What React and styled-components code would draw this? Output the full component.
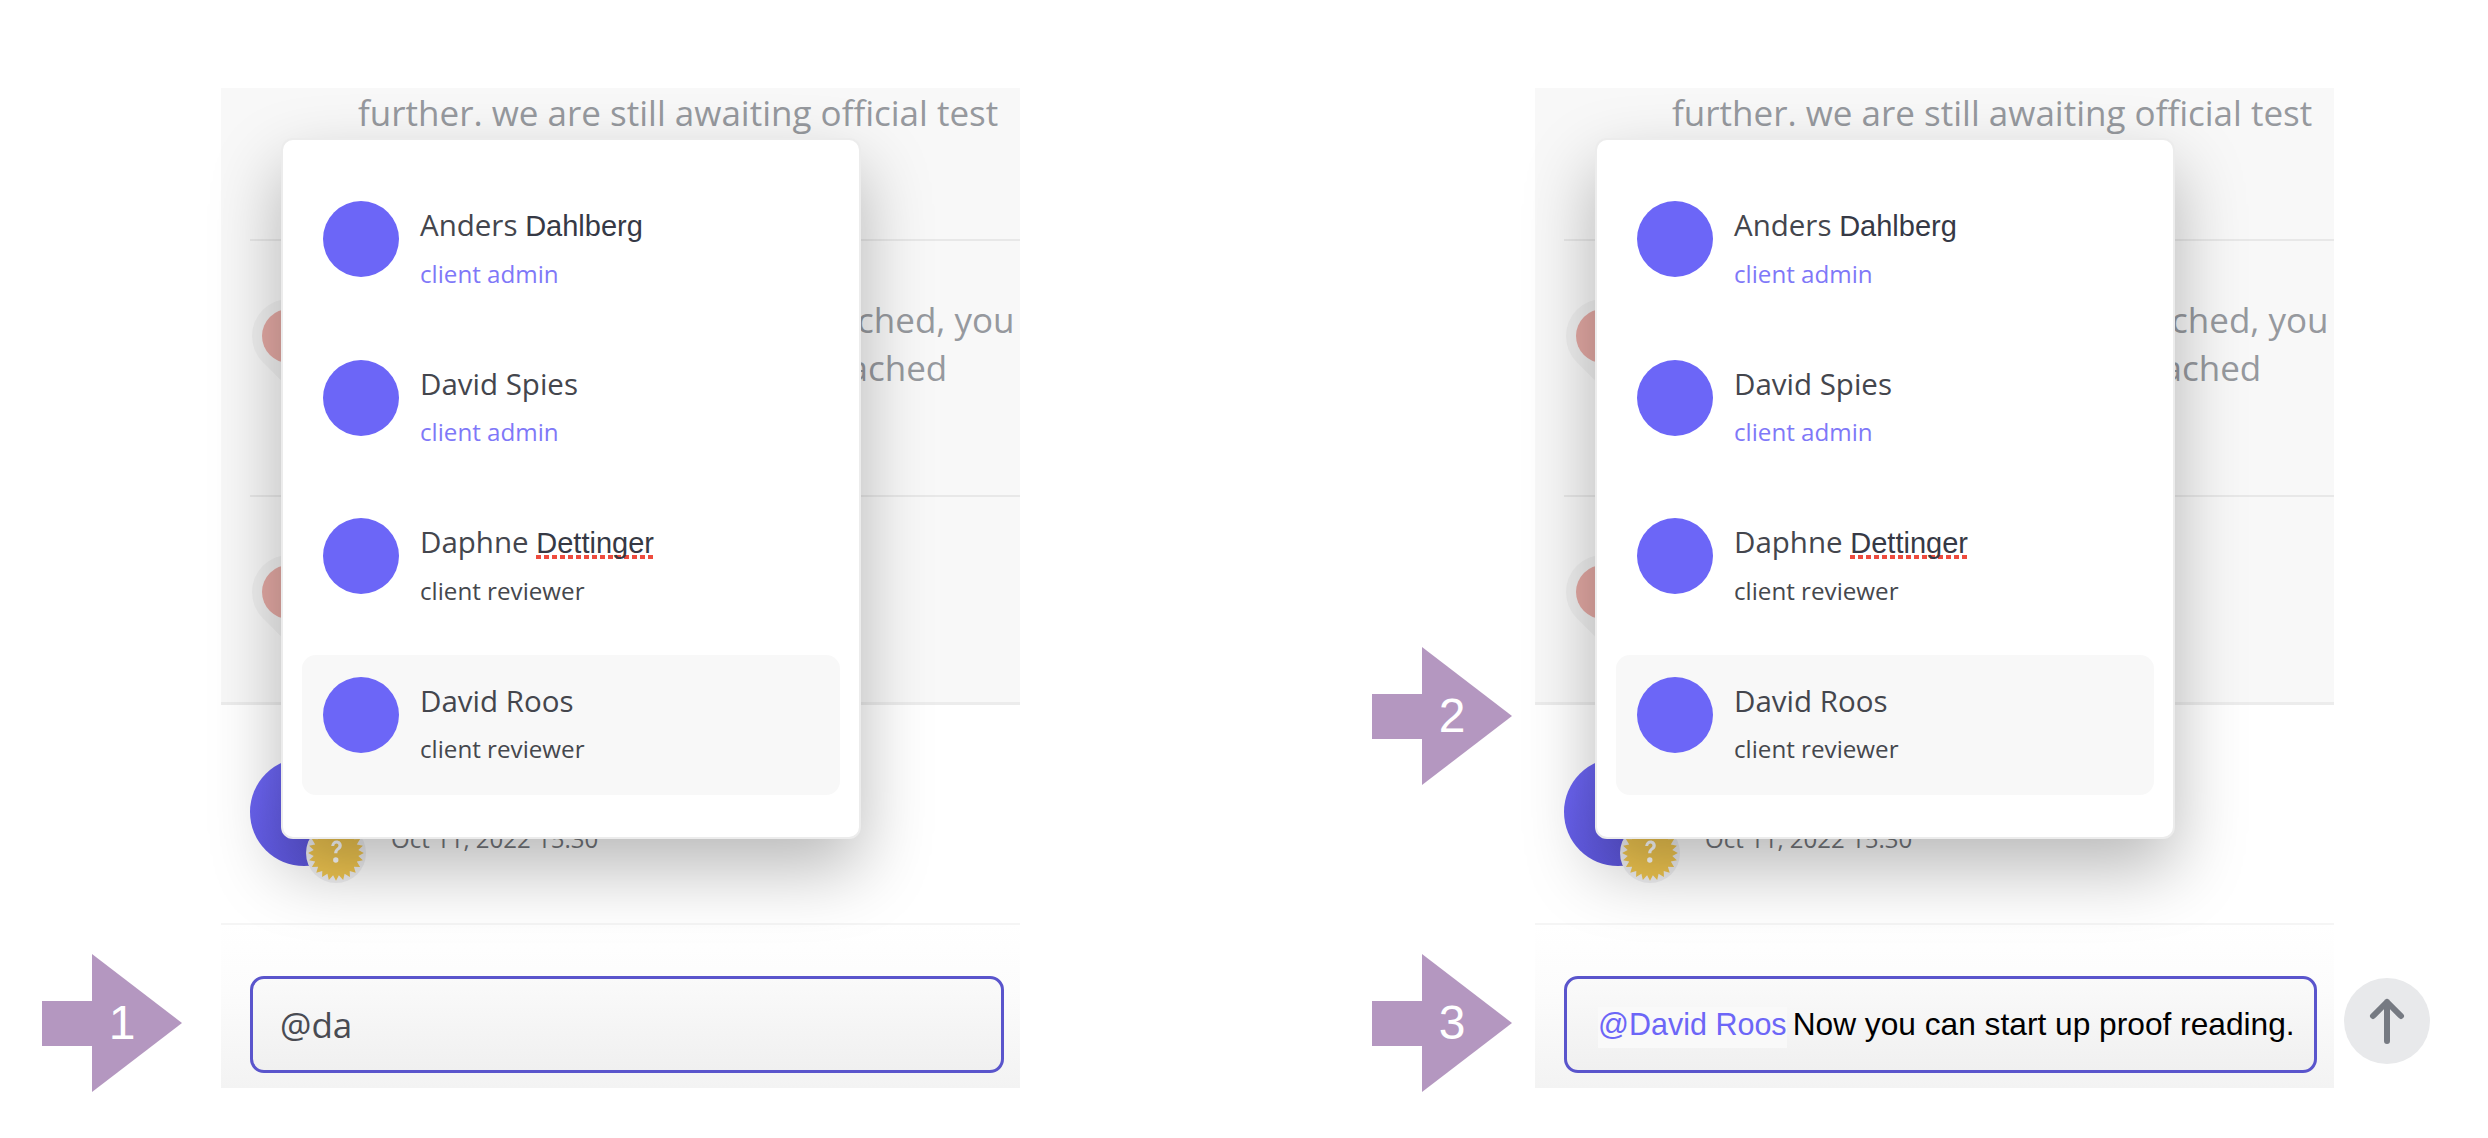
import React from "react";
import styled, { createGlobalStyle } from "styled-components";

const people = [
  { name: "Anders", pasted: "Dahlberg", role: "client admin", admin: true },
  { name: "David Spies", role: "client admin", admin: true },
  { name: "Daphne", misspelt: "Dettinger", role: "client reviewer" },
  { name: "David Roos", role: "client reviewer", active: true },
];

const sealPoints = () => {
  const points = [];
  for (let i = 0; i < 48; i++) {
    const r = i % 2 === 0 ? 26 : 21;
    const a = (i / 48) * Math.PI * 2;
    points.push(`${(28 + r * Math.cos(a)).toFixed(1)},${(28 + r * Math.sin(a)).toFixed(1)}`);
  }
  return points.join(" ");
};

const Seal = () => (
  <SealIcon viewBox="0 0 56 56">
    <circle cx="28" cy="28" r="28" fill="#f0f0f2" />
    <polygon points={sealPoints()} fill="#f0c650" />
    <path d="M23.5 21.5c.4-3.400 2.500-5.200 5-5.200 2.900 0 4.900 2 4.900 4.600 0 2.400-1.500 3.400-2.700 4.400-.9.800-1.400 1.500-1.400 2.900h-3c0-2.200.8-3.400 2-4.500 1.100-.9 2-1.600 2-2.700 0-1.100-.8-1.900-1.900-1.900-1.200 0-1.900.9-2.100 2.300z" fill="#fff" />
    <circle cx="27.800" cy="34.500" r="2.500" fill="#fff" />
  </SealIcon>
);

const Step = ({ number, top, left }) => (
  <StepArrow $top={top} $left={left}>
    <StepTail />
    <StepHead />
    <StepNumber>{number}</StepNumber>
  </StepArrow>
);

const MentionMenu = () => (
  <Menu>
    {people.map((person) => (
      <Person key={person.name} $active={person.active}>
        <PersonAvatar />
        <PersonText>
          <PersonName>
            {person.name}
            {person.pasted && <> <Pasted>{person.pasted}</Pasted></>}
            {person.misspelt && <> <Misspelt>{person.misspelt}</Misspelt></>}
          </PersonName>
          <PersonRole $admin={person.admin}>{person.role}</PersonRole>
        </PersonText>
      </Person>
    ))}
  </Menu>
);

const Thread = () => (
  <>
    <History>
      <FirstMessage>
        <MessageText>further. we are still awaiting official test</MessageText>
      </FirstMessage>
      <Message $height={254}>
        <Halo />
        <MessageText>
          the proofs have now been attached, you
          <br />
          will be told when these are attached
        </MessageText>
      </Message>
      <Message $height={207}>
        <Halo />
        <MessageText>please review</MessageText>
      </Message>
    </History>
    <Latest>
      <LatestAvatar>
        <Seal />
      </LatestAvatar>
      <LatestDate>Oct 11, 2022 15:30</LatestDate>
    </Latest>
  </>
);

const App = () => (
  <Page>
    <GlobalStyle />
    <Panel>
      <Thread />
      <MentionMenu />
      <Composer>
        <ComposerBox>
          <Typed>@da</Typed>
        </ComposerBox>
      </Composer>
      <Step number="1" top={866} left={-179} />
    </Panel>
    <Panel>
      <Thread />
      <MentionMenu />
      <Composer>
        <ComposerBox $wide>
          <Mention>@David Roos</Mention>
          <Sentence>Now you can start up proof reading.</Sentence>
        </ComposerBox>
        <SendButton>
          <svg width="40" height="50" viewBox="0 0 40 50" fill="none" stroke="#767a82" strokeWidth="6" strokeLinecap="round" strokeLinejoin="round">
            <path d="M20 45V6M6 20 20 6l14 14" />
          </svg>
        </SendButton>
      </Composer>
      <Step number="2" top={559} left={-163} />
      <Step number="3" top={866} left={-163} />
    </Panel>
  </Page>
);

const GlobalStyle = createGlobalStyle`
  html, body {
    margin: 0;
    background: #fff;
    font-family: "Open Sans", "Liberation Sans", sans-serif;
  }
`;

const Page = styled.div`
  width: 2488px;
  height: 1138px;
  box-sizing: border-box;
  padding: 88px 0 0 221px;
  display: flex;
  gap: 515px;
  overflow: hidden;
`;

const Panel = styled.section`
  position: relative;
  width: 799px;
  height: 1000px;
  display: flex;
  flex-direction: column;
`;

const History = styled.div`
  height: 617px;
  flex: none;
  box-sizing: border-box;
  padding-left: 29px;
  background: #f8f8f8;
  color: #96999e;
  border-bottom: 3px solid #ececec;
  overflow: hidden;
`;

const FirstMessage = styled.div`
  height: 153px;
  box-sizing: border-box;
  padding: 1px 0 0 108px;
  border-bottom: 2px solid #e8e8e8;
`;

const Message = styled.div`
  position: relative;
  height: ${(p) => p.$height}px;
  box-sizing: border-box;
  padding: 55px 0 0 108px;
  & + & {
    border-top: 2px solid #e8e8e8;
  }
`;

const MessageText = styled.p`
  margin: 0;
  font-size: 35px;
  line-height: 48px;
  white-space: nowrap;
`;

const Halo = styled.div`
  position: absolute;
  left: 2px;
  top: 58px;
  width: 110px;
  height: 74px;
  border-radius: 37px;
  background: #efefef;
  transform-origin: 37px 37px;
  transform: rotate(45deg);
  &::after {
    content: "";
    position: absolute;
    left: 10px;
    top: 10px;
    width: 54px;
    height: 54px;
    border-radius: 50%;
    background: #e2a8a3;
    transform: rotate(-45deg);
  }
`;

const Latest = styled.div`
  height: 220px;
  flex: none;
  box-sizing: border-box;
  border-bottom: 2px solid #f5f5f5;
  padding: 53px 0 0 29px;
  display: flex;
  align-items: flex-start;
  gap: 33px;
  background: #fff;
`;

const LatestAvatar = styled.div`
  position: relative;
  width: 108px;
  height: 108px;
  flex: none;
  border-radius: 50%;
  background: linear-gradient(135deg, #6f68f8, #5750d2);
`;

const SealIcon = styled.svg`
  position: absolute;
  right: -8px;
  bottom: -17px;
  width: 60px;
  height: 60px;
`;

const LatestDate = styled.div`
  margin-top: 64px;
  font-size: 24px;
  line-height: 34px;
  color: #74777c;
`;

const Menu = styled.div`
  position: absolute;
  z-index: 2;
  left: 60px;
  top: 50px;
  width: 580px;
  height: 701px;
  box-sizing: border-box;
  padding: 39px 19px 0;
  display: flex;
  flex-direction: column;
  gap: 18.7px;
  background: #fff;
  border: 2px solid #ececec;
  border-radius: 12px;
  box-shadow: 0 30px 70px rgba(0, 0, 0, 0.28);
`;

const Person = styled.div`
  height: 140px;
  flex: none;
  box-sizing: border-box;
  padding: 22px 21px 0;
  display: flex;
  align-items: flex-start;
  gap: 21px;
  border-radius: 14px;
  background: ${(p) => (p.$active ? "#f8f8f8" : "transparent")};
`;

const PersonAvatar = styled.div`
  width: 76px;
  height: 76px;
  flex: none;
  border-radius: 50%;
  background: #6c66f7;
`;

const PersonText = styled.div`
  display: flex;
  flex-direction: column;
  gap: 14px;
  margin-top: 6px;
`;

const PersonName = styled.div`
  font-size: 29.5px;
  line-height: 36px;
  color: #44464d;
`;

const Pasted = styled.span`
  font-family: "Liberation Sans", sans-serif;
  font-size: 29px;
  color: #363945;
`;

const Misspelt = styled(Pasted)`
  background: repeating-linear-gradient(90deg, #ee4b3e 0 5px, transparent 5px 8px) bottom / 100% 4px no-repeat;
`;

const PersonRole = styled.div`
  font-size: 24.2px;
  line-height: 32px;
  color: ${(p) => (p.$admin ? "#7f78f8" : "#45474d")};
`;

const Composer = styled.div`
  flex: 1;
  box-sizing: border-box;
  padding: 51px 0 0 29px;
  background: linear-gradient(#fff, #fcfcfc 40%, #f3f3f3);
`;

const ComposerBox = styled.div`
  width: ${(p) => (p.$wide ? "753px" : "754px")};
  height: 97px;
  box-sizing: border-box;
  padding-left: ${(p) => (p.$wide ? "31px" : "27px")};
  display: flex;
  align-items: center;
  gap: 6px;
  border: 3px solid #5a55cc;
  border-radius: 14px;
  background: linear-gradient(#fafafa, #f0f0f0);
`;

const Typed = styled.span`
  font-size: 35px;
  color: #494b52;
`;

const Mention = styled.span`
  font-family: "Liberation Sans", sans-serif;
  font-size: 30.5px;
  color: #6c66f7;
  background: #f9f9f9;
  box-shadow: 0 6px 0 #f9f9f9;
`;

const Sentence = styled.span`
  font-family: "Liberation Sans", sans-serif;
  font-size: 31.7px;
  color: #000;
`;

const SendButton = styled.div`
  position: absolute;
  left: 809px;
  top: 890px;
  width: 86px;
  height: 86px;
  border-radius: 50%;
  background: #e8e9eb;
  display: flex;
  align-items: center;
  justify-content: center;
`;

const StepArrow = styled.div`
  position: absolute;
  z-index: 3;
  left: ${(p) => p.$left}px;
  top: ${(p) => p.$top}px;
  display: flex;
  align-items: center;
`;

const StepTail = styled.div`
  width: 50px;
  height: 45px;
  background: #b497c0;
`;

const StepHead = styled.div`
  width: 0;
  height: 0;
  border-top: 69.5px solid transparent;
  border-bottom: 69.5px solid transparent;
  border-left: 90px solid #b497c0;
`;

const StepNumber = styled.span`
  position: absolute;
  left: 54px;
  width: 52px;
  text-align: center;
  font-family: "Liberation Sans", sans-serif;
  font-size: 48px;
  line-height: 48px;
  color: #fff;
`;

export default App;
